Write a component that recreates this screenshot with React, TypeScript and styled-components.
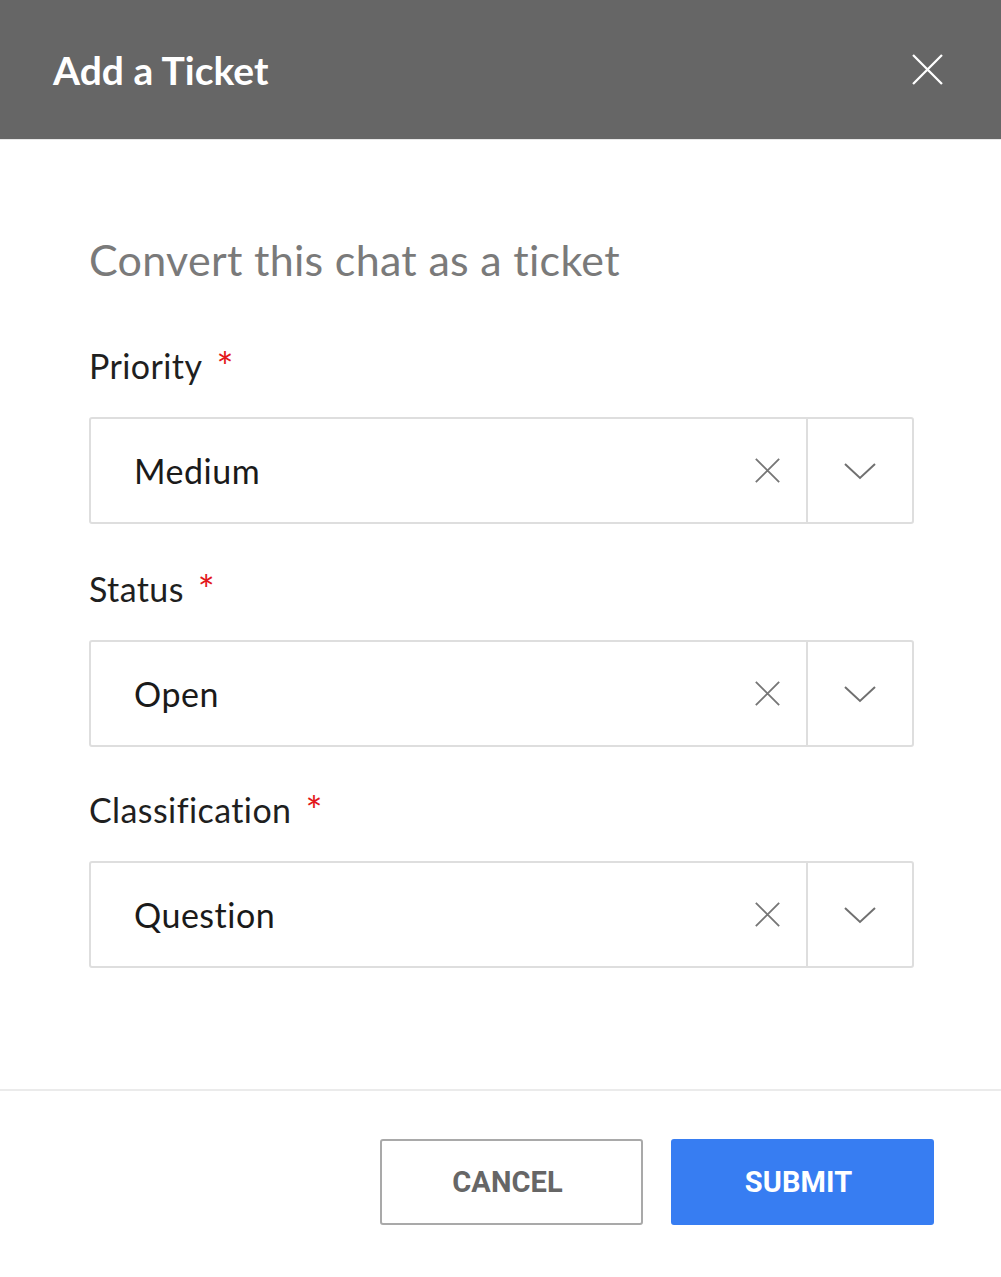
import React from "react";
import styled, { createGlobalStyle } from "styled-components";

const GlobalStyle = createGlobalStyle`
  html, body { margin: 0; padding: 0; background: #ffffff; }
  body { font-family: Lato, "Noto Sans", sans-serif; }
  * { box-sizing: border-box; }
`;

const Dialog = styled.div`
  width: 1001px;
  min-height: 1277px;
  background: #ffffff;
  display: flex;
  flex-direction: column;
`;

const Header = styled.header`
  height: 140px;
  background: #666666;
  display: flex;
  align-items: center;
  justify-content: space-between;
  padding: 0 57px 0 53px;
  border-bottom: 1px solid #e8e8e8;
`;

const HeaderTitle = styled.h1`
  margin: 0;
  color: #ffffff;
  font-family: Lato, "Noto Sans", sans-serif;
  font-weight: 700;
  font-size: 39px;
  letter-spacing: 0px;
`;

const CloseButton = styled.button`
  border: none;
  background: none;
  padding: 0;
  width: 34px;
  height: 34px;
  display: flex;
  align-items: center;
  justify-content: center;
  cursor: pointer;
`;

const Body = styled.main`
  padding: 95px 87px 0 89px;
  display: flex;
  flex-direction: column;
`;

const Subtitle = styled.h2`
  margin: 0 0 61px;
  font-family: Lato, "Noto Sans", sans-serif;
  font-weight: 400;
  font-size: 43px;
  line-height: 50px;
  letter-spacing: 0.3px;
  color: #7a7a7a;
`;

const Field = styled.div<{ $top: number }>`
  margin-top: ${(p) => p.$top}px;
  display: flex;
  flex-direction: column;
`;

const Label = styled.label`
  font-family: Lato, "Noto Sans", sans-serif;
  font-size: 34px;
  line-height: 40px;
  letter-spacing: 0.4px;
  color: #1f1f1f;
  display: flex;
  align-items: flex-start;
  margin-bottom: 30px;
`;

const Required = styled.span`
  color: #e3171b;
  font-size: 40px;
  line-height: 40px;
  margin-left: 14px;
  margin-top: 1px;
`;

const SelectBox = styled.div`
  height: 107px;
  border: 2px solid #dedede;
  border-radius: 3px;
  display: flex;
  align-items: stretch;
`;

const Value = styled.div`
  flex: 1;
  display: flex;
  align-items: center;
  padding-left: 43px;
  font-family: Lato, "Noto Sans", sans-serif;
  font-size: 34px;
  letter-spacing: 0.5px;
  color: #1a1a1a;
`;

const ClearIcon = styled.div`
  width: 70px;
  display: flex;
  align-items: center;
  justify-content: center;
  margin-right: 4px;
`;

const ToggleIcon = styled.div`
  width: 106px;
  border-left: 2px solid #dedede;
  display: flex;
  align-items: center;
  justify-content: center;
`;

const Divider = styled.hr`
  margin: 121px 0 0;
  border: none;
  height: 2px;
  background: #ebebeb;
`;

const Footer = styled.footer`
  display: flex;
  justify-content: flex-end;
  gap: 28px;
  padding: 48px 67px 0 0;
`;

const Button = styled.button<{ $primary?: boolean }>`
  width: 263px;
  height: 86px;
  border-radius: 3px;
  padding: 0 8px 0 0;
  font-family: Roboto, "Liberation Sans", sans-serif;
  font-weight: 700;
  font-size: 29px;
  letter-spacing: 0.1px;
  cursor: pointer;
  border: 2px solid ${(p) => (p.$primary ? "#377df2" : "#a9a9a9")};
  background: ${(p) => (p.$primary ? "#377df2" : "#ffffff")};
  color: ${(p) => (p.$primary ? "#ffffff" : "#666666")};
`;

const XIcon = ({ size, color, width }: { size: number; color: string; width: number }) => (
  <svg width={size} height={size} viewBox="0 0 30 30">
    <path d="M1 1 L29 29 M29 1 L1 29" stroke={color} strokeWidth={width} fill="none" />
  </svg>
);

const Chevron = () => (
  <svg width="32" height="18" viewBox="0 0 32 18">
    <path d="M1 2 L16 16 L31 2" stroke="#707070" strokeWidth="2" fill="none" />
  </svg>
);

const fields = [
  { label: "Priority", value: "Medium", top: 0 },
  { label: "Status", value: "Open", top: 45 },
  { label: "Classification", value: "Question", top: 43 },
];

export default function App() {
  return (
    <>
      <GlobalStyle />
      <Dialog>
        <Header>
          <HeaderTitle>Add a Ticket</HeaderTitle>
          <CloseButton aria-label="Close">
            <XIcon size={31} color="#ffffff" width={2.2} />
          </CloseButton>
        </Header>
        <Body>
          <Subtitle>Convert this chat as a ticket</Subtitle>
          {fields.map((f) => (
            <Field key={f.label} $top={f.top}>
              <Label>
                {f.label}
                <Required>*</Required>
              </Label>
              <SelectBox>
                <Value>{f.value}</Value>
                <ClearIcon>
                  <XIcon size={25} color="#767676" width={2.2} />
                </ClearIcon>
                <ToggleIcon>
                  <Chevron />
                </ToggleIcon>
              </SelectBox>
            </Field>
          ))}
        </Body>
        <Divider />
        <Footer>
          <Button>CANCEL</Button>
          <Button $primary>SUBMIT</Button>
        </Footer>
      </Dialog>
    </>
  );
}
